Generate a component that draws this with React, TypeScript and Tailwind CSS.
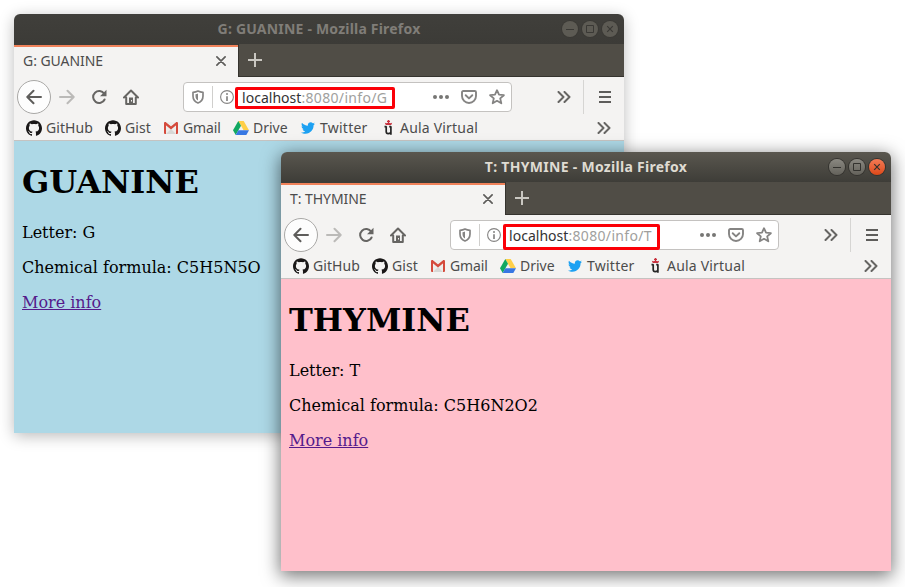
import React from 'react';
import { SiGithub } from 'react-icons/si';
import { FaTwitter } from 'react-icons/fa';

type Props = {
  focused?: boolean;
  name: string;
  letter: string;
  formula: string;
};

const UI = "font-['Noto_Sans','Open_Sans',sans-serif]";

function WindowButton({ kind, focused }: { kind: 'min' | 'max' | 'close'; focused?: boolean }) {
  const fill = !focused
    ? 'bg-[#5d5b54]'
    : kind === 'close'
      ? 'bg-linear-to-b from-[#f27a54] to-[#dd4814]'
      : 'bg-linear-to-b from-[#8a8881] to-[#64625b]';
  return (
    <span className={`flex size-4 items-center justify-center rounded-full ${fill} ${focused ? 'shadow-[0_0_0_1px_#34332f]' : 'shadow-[0_0_0_1px_#3a3935]'}`}>
      <svg width="16" height="16" viewBox="0 0 16 16" fill="none" stroke={focused ? '#33322e' : '#3a3935'} strokeWidth="1">
        {kind === 'min' && <path d="M4 8.5h8" />}
        {kind === 'max' && <path d="M4.5 4.5h7v7h-7z" />}
        {kind === 'close' && <path d="M5.2 5.2l5.6 5.6M10.8 5.2l-5.6 5.6" strokeWidth="1.2" />}
      </svg>
    </span>
  );
}

function Chevrons() {
  return (
    <svg className="shrink-0" width="14" height="12" viewBox="0 0 14 12" fill="none" stroke="#666563" strokeWidth="2" strokeLinejoin="round" strokeLinecap="round">
      <path d="M1.500 1l5 5-5 5M7.500 1l5 5-5 5" />
    </svg>
  );
}

function BackIcon({ color, size }: { color: string; size: number }) {
  return (
    <svg width={size} height={size} viewBox="0 0 16 16" fill="none" stroke={color} strokeWidth="2" strokeLinecap="round" strokeLinejoin="round">
      <path d="M15 8H1.500M7.500 1.800L1.300 8l6.200 6.200" />
    </svg>
  );
}

function GmailIcon() {
  return (
    <svg width="14" height="12" viewBox="0 0 14 12">
      <path d="M1 0h12v12H1z" fill="#eeeeec" />
      <path d="M2 12l5-5 5 5z" fill="#d8d8d6" />
      <path d="M0 1.200C0 .4.600 0 1.200 0H2v12H1a1 1 0 0 1-1-1zM14 1.200c0-.8-.6-1.200-1.200-1.200H12v12h1a1 1 0 0 0 1-1z" fill="#d54b3d" />
      <path d="M.8.9L7 6l6.200-5.100" fill="none" stroke="#d54b3d" strokeWidth="2.400" />
    </svg>
  );
}

function DriveIcon() {
  return (
    <svg width="16" height="14" viewBox="0 0 16 14">
      <path d="M5.300 0h5.400L16 9.300h-5.400z" fill="#ffcf48" />
      <path d="M5.300 0L0 9.300 2.700 14 8 4.700z" fill="#11a861" />
      <path d="M5.400 9.300H16L13.300 14H2.700z" fill="#3777e3" />
    </svg>
  );
}

function AulaIcon() {
  return (
    <svg width="9" height="15" viewBox="0 0 9 15" fill="none">
      <path d="M4.500 0v4.500M3 1.300h3" stroke="#c8313e" strokeWidth="1.200" />
      <path d="M.8 2.800l1.900.5 1.800-.7 1.800.7 1.900-.5-1 2.200H1.800z" fill="#c8313e" />
      <path d="M2.200 6.200v5.300c0 1.500.6 2.200 1.900 2.200 1.100 0 1.900-.3 2.700-.9M6.900 6.200v8.600M.5 6.700h1.900M5.200 6.700h1.900" stroke="#252525" strokeWidth="1.700" />
    </svg>
  );
}

function Bookmark({ icon, label, box, text }: { icon: React.ReactNode; label: string; box: string; text: string }) {
  return (
    <div className={`flex shrink-0 items-center ${box}`}>
      {icon}
      <span className={`whitespace-nowrap ${text}`}>{label}</span>
    </div>
  );
}

function BrowserWindow({ focused, name, letter, formula }: Props) {
  return (
    <section
      className={`flex h-[419px] w-[610px] flex-col overflow-hidden rounded-t-[6px] text-[14px] text-[#4c4c4c] ${UI} ${
        focused ? 'shadow-[0_4px_18px_1px_rgba(0,0,0,0.55)]' : 'shadow-[0_3px_15px_0_rgba(0,0,0,0.27)]'
      }`}
    >
      <header
        className={`flex h-[30px] shrink-0 items-center pr-1.5 ${
          focused ? 'bg-linear-to-b from-[#5a574f] to-[#3e3d38] text-[#dfdbd2]' : 'bg-linear-to-b from-[#403f3b] to-[#3c3b37] text-[#807d78]'
        }`}
      >
        <h2 className={`flex-1 pl-[62px] text-center text-[14px] leading-5 font-bold ${focused ? 'tracking-[0.29px]' : 'tracking-[0.2px]'}`}>
          {letter}: {name} - Mozilla Firefox
        </h2>
        <div className="flex gap-1">
          <WindowButton kind="min" focused={focused} />
          <WindowButton kind="max" focused={focused} />
          <WindowButton kind="close" focused={focused} />
        </div>
      </header>

      <div className="flex h-[33px] shrink-0 bg-[#504d46]">
        <div className={`flex w-56 flex-col ${focused ? 'bg-[#3e3d38]' : 'bg-[#3c3b37]'} pt-px`}>
          <div className="flex flex-1 items-center justify-between border-t-2 border-[#f0825a] bg-[#f4f3f2] pr-3 pb-[3px] pl-[9px]">
            <span className="leading-5 tracking-[-0.06px]">{letter}: {name}</span>
            <svg width="10" height="10" viewBox="0 0 10 10" stroke="#5e5d5b" strokeWidth="1.700" strokeLinecap="round">
              <path d="M.9.9l8.200 8.200M9.100.9L.9 9.100" />
            </svg>
          </div>
        </div>
        <div className="flex flex-1 items-center border-b border-l border-[#35332e] pl-[9px]">
          <svg width="14" height="14" viewBox="0 0 14 14" stroke="#c9c7c1" strokeWidth="2">
            <path d="M7 0v14M0 7h14" />
          </svg>
        </div>
      </div>

      <nav className="flex h-10 shrink-0 items-center bg-[#f4f3f2]">
        <span className="ml-[3px] flex size-[34px] shrink-0 items-center justify-center rounded-full border border-[#a9a8a6] bg-[#fdfdfd]">
          <BackIcon color="#5e5d5b" size={16} />
        </span>
        <span className="ml-2 rotate-180"><BackIcon color="#bbbab8" size={16} /></span>
        <svg className="ml-4" width="16" height="16" viewBox="0 0 16 16" fill="none">
          <path d="M13.200 4.800A6 6 0 1 0 13.600 10.500" stroke="#666563" strokeWidth="2" strokeLinecap="round" />
          <path d="M15.500.8v6.400H9z" fill="#666563" />
        </svg>
        <svg className="ml-4" width="16" height="16" viewBox="0 0 16 16" fill="none" stroke="#666563" strokeWidth="2" strokeLinejoin="round" strokeLinecap="round">
          <path d="M1 8.500L8 1.500l7 7M3.200 8.500V15h9.600V8.500" />
          <path d="M6 8.500h4V15H6z" fill="#666563" stroke="none" />
          <path d="M8 11h1v1.500H8z" fill="#f4f3f2" stroke="none" />
        </svg>
        <div className="relative ml-[44px] flex h-[30px] w-[329px] shrink-0 items-center rounded-[4px] border border-[#c4c2c0] bg-white">
          <svg className="ml-2" width="12" height="14" viewBox="0 0 12 14" fill="none">
            <path d="M6 1c1.500.8 3.200 1.200 5 1.300V6c0 3.200-1.700 5.700-5 7-3.300-1.300-5-3.800-5-7V2.300C2.800 2.200 4.500 1.800 6 1z" stroke="#858483" strokeWidth="1.700" strokeLinejoin="round" />
            <path d="M6 3.500v7C4.300 9.500 3.500 8 3.500 6V4.300C4.500 4.200 5.300 3.900 6 3.500z" fill="#858483" />
          </svg>
          <span className="ml-2 h-[22px] w-px bg-[#d0cfcd]" />
          <svg className="ml-[7px]" width="14" height="14" viewBox="0 0 14 14" fill="none">
            <circle cx="7" cy="7" r="6.400" stroke="#858483" strokeWidth="1.100" />
            <path d="M7 6.200V11" stroke="#858483" strokeWidth="1.700" />
            <circle cx="7" cy="4" r="1" fill="#858483" />
          </svg>
          <span className="ml-2 w-[180px] text-[14px] whitespace-nowrap text-[#a09f9d]">
            <span className="tracking-[0.03px] text-[#333]">localhost</span>
            <span className="tracking-[0.33px]">:8080/info/{letter}</span>
          </span>
          <svg className="ml-[11px]" width="16" height="4" viewBox="0 0 16 4" fill="#777674">
            <circle cx="2" cy="2" r="2" /><circle cx="8" cy="2" r="2" /><circle cx="14" cy="2" r="2" />
          </svg>
          <svg className="ml-3" width="16" height="14" viewBox="0 0 16 14" fill="none" stroke="#858483" strokeWidth="1.900" strokeLinecap="round" strokeLinejoin="round">
            <path d="M2.300 1h11.400c.8 0 1.300.5 1.300 1.300V6a7 7 0 0 1-14 0V2.300C1 1.500 1.500 1 2.300 1z" />
            <path d="M4.700 5.200L8 8.400l3.300-3.200" />
          </svg>
          <svg className="ml-3" width="16" height="16" viewBox="0 0 16 16" fill="none" stroke="#858483" strokeWidth="1.800" strokeLinejoin="round">
            <path d="M8 1.200l2 4.500 4.900.5-3.700 3.200 1.100 4.900L8 11.800l-4.300 2.500 1.100-4.900L1.100 6.200 6 5.700z" />
          </svg>
          <span
            className={`absolute rounded-[2px] border-[3px] border-[#fb0007] ${
              focused ? 'top-[3px] left-[52px] h-[26px] w-[157px]' : 'top-1 left-[51px] h-[22px] w-[160px]'
            }`}
          />
        </div>
        <span className="ml-[45px]"><Chevrons /></span>
        <span className="ml-3 h-[34px] w-px bg-[#d6d5d3]" />
        <span className="ml-[15px] flex w-3 flex-col gap-[3px]">
          <i className="h-0.5 bg-[#5e5d5b]" />
          <i className="h-0.5 bg-[#5e5d5b]" />
          <i className="h-0.5 bg-[#5e5d5b]" />
        </span>
      </nav>

      <div className="flex h-6 shrink-0 items-center border-b border-[#c5c3c1] bg-[#f4f3f2] pr-[13px] pb-0.5 pl-3">
        <Bookmark box="w-[79px] gap-1" text="tracking-[0.05px]" label="GitHub" icon={<SiGithub size={16} color="#191717" />} />
        <Bookmark box="w-[59px] gap-1" text="tracking-[0.1px]" label="Gist" icon={<SiGithub size={16} color="#191717" />} />
        <Bookmark box="w-[69px] gap-[5px]" text="tracking-[-0.1px]" label="Gmail" icon={<GmailIcon />} />
        <Bookmark box="w-[68px] gap-1" text="" label="Drive" icon={<DriveIcon />} />
        <Bookmark box="w-[83px] gap-[5px]" text="tracking-[0.25px]" label="Twitter" icon={<FaTwitter size={14} color="#1da1f2" />} />
        <Bookmark box="flex-1 gap-[7px]" text="tracking-[0.2px]" label="Aula Virtual" icon={<AulaIcon />} />
        <Chevrons />
      </div>

      <main className={`flex-1 px-2 font-['DejaVu_Serif',serif] text-[16px] leading-[19px] text-black ${focused ? 'bg-[#ffc0cb]' : 'bg-[#add8e6]'}`}>
        <h1 className="mt-[23px] mb-[22px] text-[32px] leading-[37px] font-bold">{name}</h1>
        <p className="mb-4">Letter: {letter}</p>
        <p className="mb-4">Chemical formula: {formula}</p>
        <a className="text-[#551a8b] underline">More info</a>
      </main>
    </section>
  );
}

export default function App() {
  return (
    <div className="relative h-[587px] w-[905px] overflow-hidden bg-white">
      <div className="absolute top-[14px] left-[14px]">
        <BrowserWindow name="GUANINE" letter="G" formula="C5H5N5O" />
      </div>
      <div className="absolute top-[152px] left-[281px]">
        <BrowserWindow focused name="THYMINE" letter="T" formula="C5H6N2O2" />
      </div>
    </div>
  );
}
